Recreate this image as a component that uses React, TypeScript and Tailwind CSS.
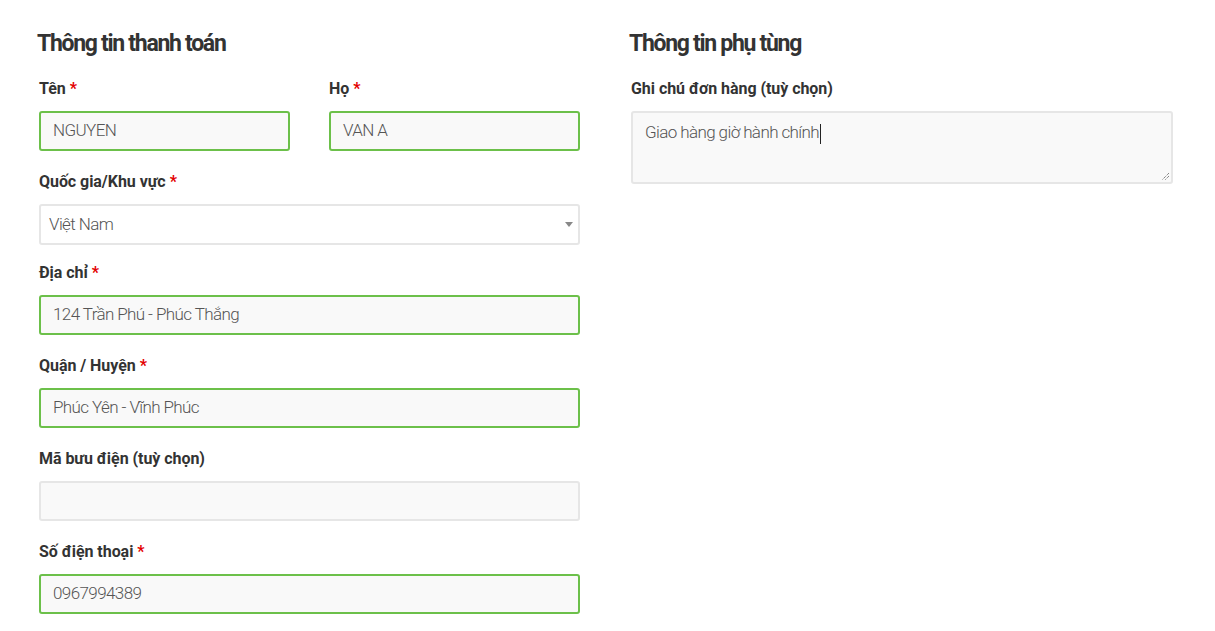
import React from "react";

const font = { fontFamily: "Roboto, 'Noto Sans', sans-serif" };

function Label({ text, req }: { text: string; req?: boolean }) {
  return (
    <div className="h-[23px] text-[16px] leading-[23px] font-bold text-[#333] tracking-[-0.05px]">
      {text}
      {req && <span className="text-[#e30000] ml-[4px]">*</span>}
    </div>
  );
}

function Field({ value, ok = true }: { value: string; ok?: boolean }) {
  return (
    <div
      className={`h-[40px] mt-[11px] rounded-[3px] border-2 bg-[#f9f9f9] pl-[12px] flex items-center text-[17px] font-light text-[#555] tracking-[-0.6px] ${
        ok ? "border-[#6cc04a]" : "border-[#e6e6e6]"
      }`}
    >
      {value}
    </div>
  );
}

export default function App() {
  return (
    <div className="w-[1215px] h-[631px] bg-white overflow-hidden" style={font}>
      <div className="flex pt-[31px] pl-[37px]">
        {/* left column */}
        <div className="w-[543px]">
          <h3 className="h-[26px] text-[23px] leading-[26px] font-bold text-[#333] tracking-[-1.3px]">Thông tin thanh toán</h3>
          <div className="pl-[2px] mt-[20px]">
            <div className="grid grid-cols-2 gap-[39px]">
              <div>
                <Label text="Tên" req />
                <Field value="NGUYEN" />
              </div>
              <div>
                <Label text="Họ" req />
                <Field value="VAN A" />
              </div>
            </div>

            <div className="mt-[19px]">
              <Label text="Quốc gia/Khu vực" req />
              <div className="h-[41px] mt-[11px] rounded-[3px] border-2 border-[#e6e6e6] bg-white pl-[8px] pr-[5px] flex items-center justify-between text-[17px] font-light text-[#555] tracking-[-0.6px]">
                <span>Việt Nam</span>
                <svg width="8" height="5" viewBox="0 0 8 5">
                  <path d="M0 0h8L4 5z" fill="#888" />
                </svg>
              </div>
            </div>

            <div className="mt-[16px]">
              <Label text="Địa chỉ" req />
              <Field value="124 Trần Phú - Phúc Thắng" />
            </div>

            <div className="mt-[19px]">
              <Label text="Quận / Huyện" req />
              <Field value="Phúc Yên - Vĩnh Phúc" />
            </div>

            <div className="mt-[19px]">
              <Label text="Mã bưu điện (tuỳ chọn)" />
              <Field value="" ok={false} />
            </div>

            <div className="mt-[19px]">
              <Label text="Số điện thoại" req />
              <Field value="0967994389" />
            </div>
          </div>
        </div>

        {/* right column */}
        <div className="w-[544px] ml-[49px]">
          <h3 className="h-[26px] text-[23px] leading-[26px] font-bold text-[#333] tracking-[-1.3px]">Thông tin phụ tùng</h3>
          <div className="pl-[2px] mt-[20px]">
            <Label text="Ghi chú đơn hàng (tuỳ chọn)" />
            <div className="relative h-[73px] mt-[11px] rounded-[3px] border-2 border-[#e6e6e6] bg-[#f9f9f9] pl-[12px] pt-[7px] text-[17px] leading-[24px] font-light text-[#555] tracking-[-0.6px]">
              <span>Giao hàng giờ hành chính</span>
              <span className="inline-block w-px h-[20px] bg-[#222] align-middle ml-px" />
              <svg width="9" height="9" viewBox="0 0 9 9" className="absolute right-[1px] bottom-[1px]">
                <path d="M8 1L1 8M8 4L4 8" stroke="#555" strokeWidth="1" strokeDasharray="1 1" />
              </svg>
            </div>
          </div>
        </div>
      </div>
    </div>
  );
}
